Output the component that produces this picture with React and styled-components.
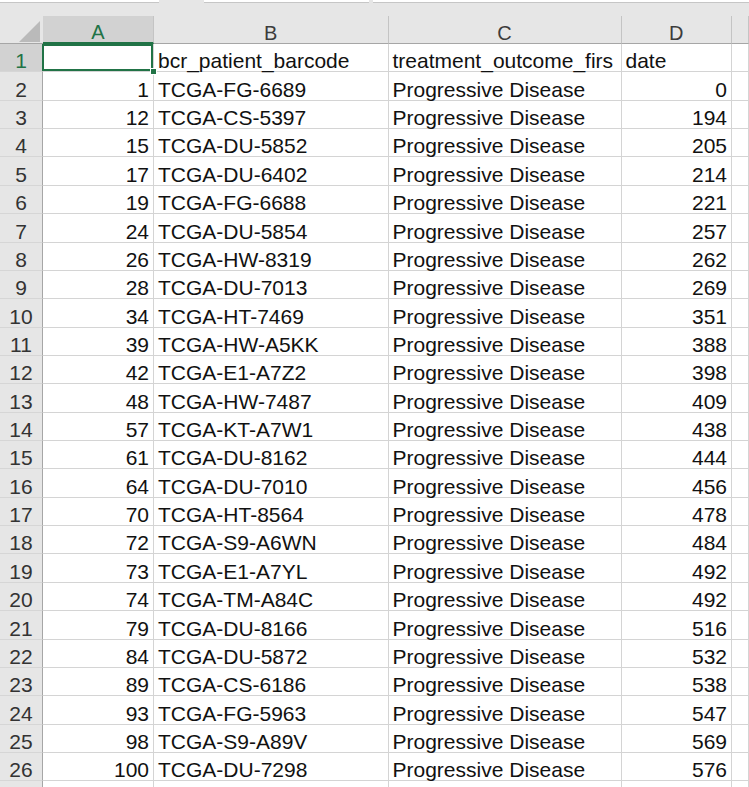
import React from 'react';
import styled, { createGlobalStyle } from 'styled-components';

const GREEN = '#217346';
const COLS = '43px 111px 234.5px 233px 110.5px 1fr';
const ROW_H = 28.37;

const Global = createGlobalStyle`
  html, body { margin: 0; padding: 0; background: #fff; overflow: hidden; }
  body { font-family: "Liberation Sans", Arial, sans-serif; }
`;

const Page = styled.div`
  width: 749px;
  height: 787px;
  overflow: hidden;
  background: #fff;
`;

const TopStrip = styled.div`
  display: flex;
  height: 3px;
  background: #e6e6e6;
`;

const StripBox = styled.div`
  box-sizing: border-box;
  height: 3px;
  background: #fff;
  border-bottom: 1px solid #c6c6c6;
  width: ${p => (p.$w ? `${p.$w}px` : 'auto')};
  flex: ${p => (p.$grow ? 1 : 'none')};
  margin-left: ${p => p.$ml || 0}px;
`;

const HeaderRow = styled.div`
  display: grid;
  grid-template-columns: ${COLS};
  height: 41px;
  background: #e6e6e6;
`;

const Corner = styled.div`
  box-sizing: border-box;
  display: flex;
  align-items: flex-end;
  justify-content: flex-end;
  padding: 0 3px 1px 0;
  border-bottom: 1px solid #a6a6a6;
`;

const ColHeader = styled.div`
  box-sizing: border-box;
  align-self: end;
  height: 28px;
  display: flex;
  align-items: flex-end;
  justify-content: center;
  font-size: 20px;
  line-height: 20px;
  color: ${p => (p.$selected ? GREEN : '#3c3c3c')};
  background: ${p => (p.$selected ? '#d2d2d2' : '#e6e6e6')};
  border-right: 1px solid #c4c4c4;
  border-bottom: ${p => (p.$selected ? `2px solid ${GREEN}` : '1px solid #a6a6a6')};
`;

const Row = styled.div`
  display: grid;
  grid-template-columns: ${COLS};
  height: ${ROW_H}px;
`;

const RowHeader = styled.div`
  box-sizing: border-box;
  display: flex;
  align-items: flex-end;
  justify-content: center;
  font-size: 21px;
  line-height: 20px;
  color: ${p => (p.$selected ? GREEN : '#333')};
  background: ${p => (p.$selected ? '#d2d2d2' : '#e6e6e6')};
  border-right: 1px solid #a6a6a6;
  border-bottom: 1px solid #d6d6d6;
`;

const Cell = styled.div`
  box-sizing: border-box;
  position: relative;
  display: flex;
  align-items: flex-end;
  justify-content: ${p => (p.$align === 'right' ? 'flex-end' : 'flex-start')};
  padding: 0 4px 0 4px;
  font-size: 21px;
  line-height: 20px;
  color: #111;
  white-space: nowrap;
  overflow-x: ${p => (p.$selected ? 'visible' : 'clip')};
  overflow-y: visible;
  border-right: 1px solid #d4d4d4;
  border-bottom: 1px solid #d4d4d4;

  ${p =>
    p.$selected &&
    `
    &::after {
      content: '';
      position: absolute;
      top: 0;
      left: -1px;
      right: 0;
      bottom: 0;
      border: 2px solid ${GREEN};
      z-index: 1;
    }
    &::before {
      content: '';
      position: absolute;
      right: -4px;
      bottom: -4px;
      width: 5px;
      height: 5px;
      background: ${GREEN};
      border: 1px solid #fff;
      z-index: 2;
    }
  `}
`;

const rows = [
  [1, 'TCGA-FG-6689', 0],
  [12, 'TCGA-CS-5397', 194],
  [15, 'TCGA-DU-5852', 205],
  [17, 'TCGA-DU-6402', 214],
  [19, 'TCGA-FG-6688', 221],
  [24, 'TCGA-DU-5854', 257],
  [26, 'TCGA-HW-8319', 262],
  [28, 'TCGA-DU-7013', 269],
  [34, 'TCGA-HT-7469', 351],
  [39, 'TCGA-HW-A5KK', 388],
  [42, 'TCGA-E1-A7Z2', 398],
  [48, 'TCGA-HW-7487', 409],
  [57, 'TCGA-KT-A7W1', 438],
  [61, 'TCGA-DU-8162', 444],
  [64, 'TCGA-DU-7010', 456],
  [70, 'TCGA-HT-8564', 478],
  [72, 'TCGA-S9-A6WN', 484],
  [73, 'TCGA-E1-A7YL', 492],
  [74, 'TCGA-TM-A84C', 492],
  [79, 'TCGA-DU-8166', 516],
  [84, 'TCGA-DU-5872', 532],
  [89, 'TCGA-CS-6186', 538],
  [93, 'TCGA-FG-5963', 547],
  [98, 'TCGA-S9-A89V', 569],
  [100, 'TCGA-DU-7298', 576],
];

function CornerTriangle() {
  return (
    <svg width="21" height="21" viewBox="0 0 21 21">
      <polygon points="0,21 21,0 21,21" fill="#bababa" />
    </svg>
  );
}

export default function App() {
  return (
    <Page>
      <Global />
      <TopStrip>
        <StripBox $w={159} />
        <StripBox $w={165} $ml={45} />
        <StripBox $grow $ml={4} />
      </TopStrip>
      <HeaderRow>
        <Corner>
          <CornerTriangle />
        </Corner>
        <ColHeader $selected>A</ColHeader>
        <ColHeader>B</ColHeader>
        <ColHeader>C</ColHeader>
        <ColHeader>D</ColHeader>
        <ColHeader />
      </HeaderRow>
      <Row>
        <RowHeader $selected>1</RowHeader>
        <Cell $selected />
        <Cell>bcr_patient_barcode</Cell>
        <Cell>treatment_outcome_firs</Cell>
        <Cell>date</Cell>
        <Cell />
      </Row>
      {rows.map(([a, b, d], i) => (
        <Row key={i}>
          <RowHeader>{i + 2}</RowHeader>
          <Cell $align="right">{a}</Cell>
          <Cell>{b}</Cell>
          <Cell>Progressive Disease</Cell>
          <Cell $align="right">{d}</Cell>
          <Cell />
        </Row>
      ))}
      <Row>
        <RowHeader />
        <Cell />
        <Cell />
        <Cell />
        <Cell />
        <Cell />
      </Row>
    </Page>
  );
}
